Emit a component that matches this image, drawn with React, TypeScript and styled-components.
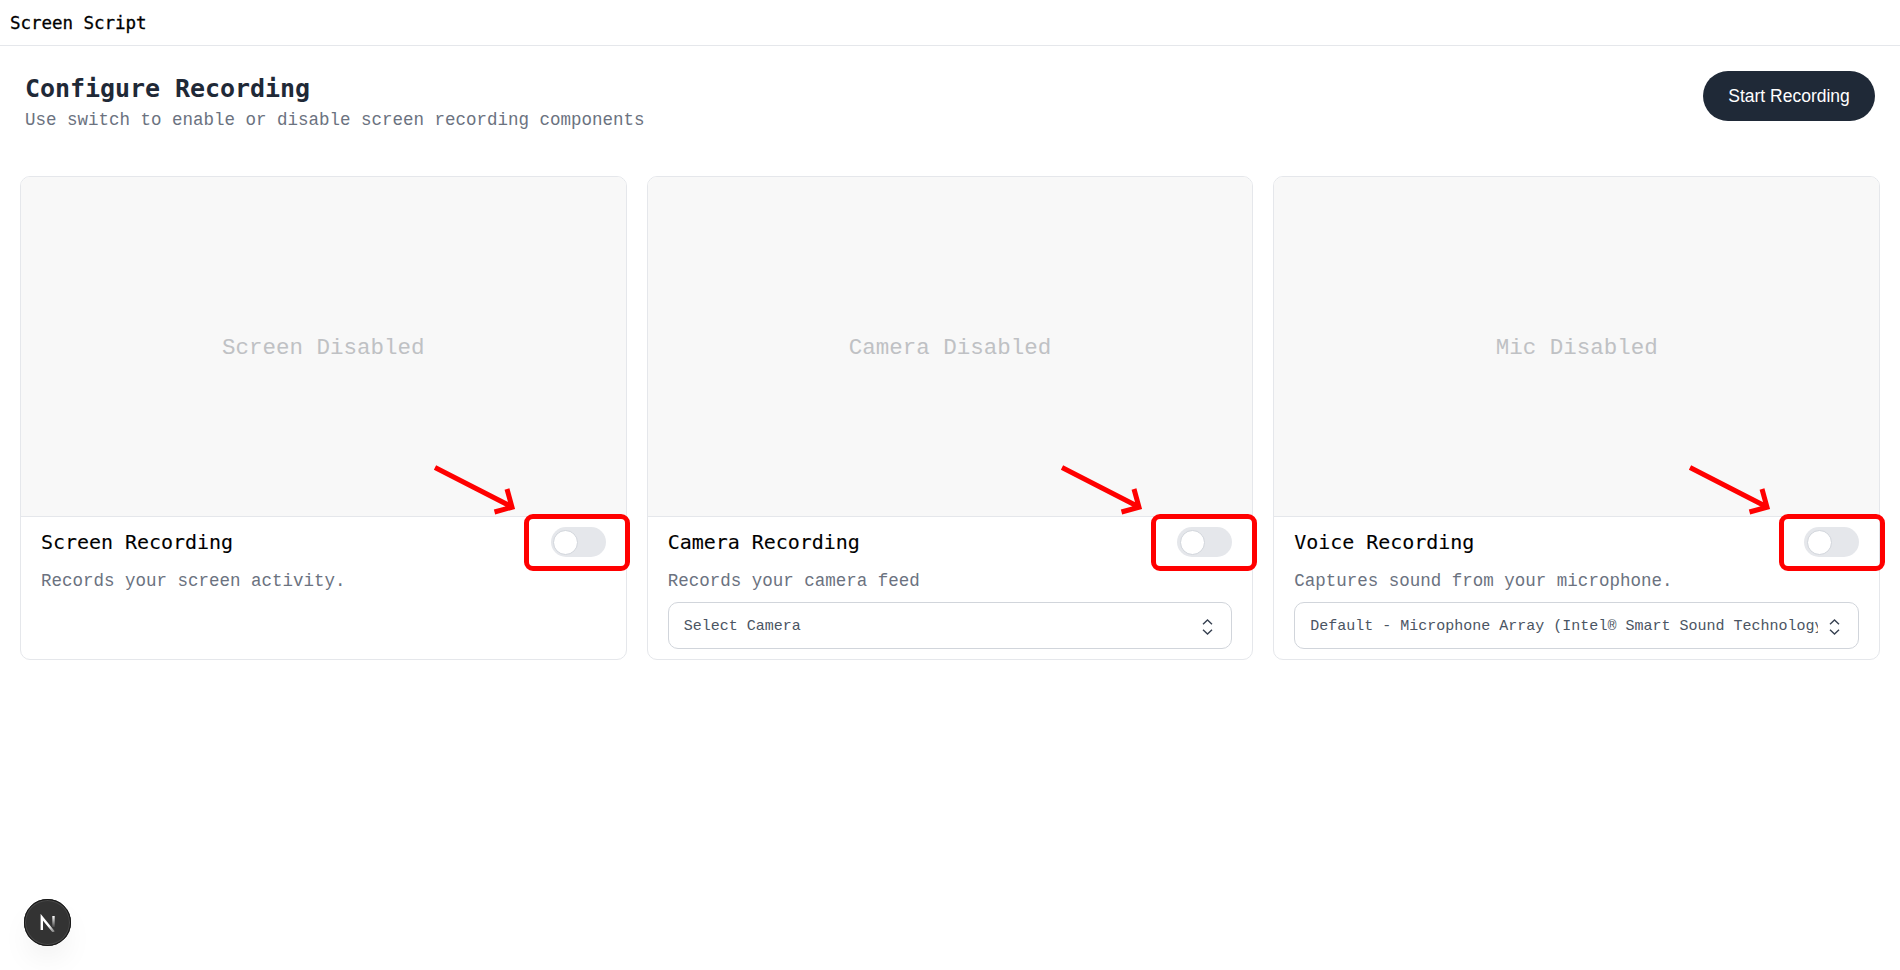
import React from 'react';
import styled, { createGlobalStyle } from 'styled-components';

const headingFont = '"DejaVu Sans Mono", "Liberation Mono", monospace';

const GlobalStyle = createGlobalStyle`
  *, *::before, *::after { box-sizing: border-box; }
  html, body { margin: 0; padding: 0; background: #fff; }
  body {
    font-family: "Liberation Mono", "DejaVu Sans Mono", monospace;
    color: #000;
    overflow: hidden;
  }
  h1, h2, p { margin: 0; font-weight: 400; }
  button { font: inherit; border: 0; padding: 0; cursor: pointer; }
`;

const Page = styled.div`
  min-height: 970px;
`;

const TopBar = styled.header`
  height: 46px;
  display: flex;
  align-items: center;
  padding: 0 10px;
  border-bottom: 1px solid #e5e7eb;
  font-family: ${headingFont};
  font-size: 17.5px;
  letter-spacing: -0.035px;
  -webkit-text-stroke: 0.3px #000;
`;

const Intro = styled.section`
  display: flex;
  justify-content: space-between;
  align-items: flex-start;
  height: 110px;
  padding: 25px;
`;

const Heading = styled.h1`
  margin-bottom: 2px;
  font-family: ${headingFont};
  font-size: 25px;
  line-height: 35px;
  font-weight: 700;
  letter-spacing: -0.05px;
  color: #1f2937;
`;

const Subheading = styled.p`
  font-size: 17.5px;
  line-height: 25px;
  color: #6b7280;
`;

const StartButton = styled.button`
  width: 172px;
  height: 50px;
  border-radius: 25px;
  background: #1f2937;
  color: #fff;
  font-family: "Liberation Sans", Arial, sans-serif;
  font-size: 17.5px;
  white-space: nowrap;
`;

const Cards = styled.main`
  display: grid;
  grid-template-columns: repeat(3, minmax(0, 1fr));
  gap: 20px;
  padding: 20px;
`;

const Card = styled.article`
  position: relative;
  border: 1px solid #e5e7eb;
  border-radius: 10px;
`;

const Preview = styled.div`
  height: 340px;
  display: flex;
  align-items: center;
  justify-content: center;
  padding-top: 2px;
  border-bottom: 1px solid #e5e7eb;
  border-radius: 9px 9px 0 0;
  background: #f8f8f8;
  color: #bfc1c4;
  font-size: 22.5px;
`;

const Details = styled.div`
  display: flex;
  flex-direction: column;
  gap: 10px;
  padding: 10px 20px;
`;

const TitleRow = styled.div`
  height: 30px;
  display: flex;
  align-items: center;
  justify-content: space-between;
`;

const CardTitle = styled.h2`
  font-family: ${headingFont};
  font-size: 20px;
  letter-spacing: -0.04px;
  -webkit-text-stroke: 0.1px #000;
`;

const Switch = styled.button`
  width: 55px;
  height: 30px;
  display: flex;
  align-items: center;
  padding-left: 2.5px;
  border-radius: 15px;
  background: #e5e7eb;
`;

const Thumb = styled.span`
  width: 25px;
  height: 25px;
  border: 1px solid #d1d5db;
  border-radius: 50%;
  background: #fff;
`;

const Description = styled.p`
  height: 25px;
  padding-top: 2px;
  font-size: 17.5px;
  line-height: 25px;
  color: #6b7280;
`;

const SelectBox = styled.button`
  height: 47px;
  display: flex;
  align-items: center;
  gap: 11px;
  padding: 2px 18px 0 15px;
  border: 1px solid #d1d5db;
  border-radius: 10px;
  background: #fff;
  color: #4b5563;
`;

const SelectValue = styled.span`
  flex: 1;
  overflow: hidden;
  white-space: nowrap;
  text-align: left;
  font-size: 15px;
`;

const Highlight = styled.div<{ $overhang: number }>`
  position: absolute;
  top: 337px;
  right: ${(p) => -p.$overhang - 1}px;
  width: 106px;
  height: 57px;
  border: 5px solid #f00;
  border-radius: 9px;
  pointer-events: none;
`;

const Arrow = styled.svg`
  position: absolute;
  left: -96px;
  top: -55px;
  overflow: visible;
`;

const DevBadge = styled.div`
  position: fixed;
  left: 24px;
  bottom: 24px;
  width: 47px;
  height: 47px;
  display: flex;
  align-items: center;
  justify-content: center;
  border-radius: 50%;
  background: #333;
  box-shadow: inset 0 0 0 1px #171717, inset 0 0 0 2px #484848,
    0 16px 32px -8px rgba(0, 0, 0, 0.1);
`;

const UpDown = () => (
  <svg width="11" height="16" viewBox="0 0 11 16" fill="none" stroke="#374151" strokeWidth="1.4">
    <path d="M1 5.3 5.5 1 10 5.3M1 10.7 5.5 15 10 10.7" />
  </svg>
);

const Callout = ({ overhang }: { overhang: number }) => (
  <Highlight $overhang={overhang}>
    <Arrow width="90" height="50" viewBox="0 0 90 50" fill="none" stroke="#f00" strokeWidth="5">
      <path d="M2 3.5 79.5 43.2M74 25 79 43.2 61.5 48" />
    </Arrow>
  </Highlight>
);

const NextMark = () => (
  <svg width="18" height="18" viewBox="0 0 18 18" fill="none">
    <defs>
      <linearGradient id="diag" x1="11" y1="11" x2="16" y2="18" gradientUnits="userSpaceOnUse">
        <stop stopColor="#fff" />
        <stop offset="1" stopColor="#fff" stopOpacity="0.3" />
      </linearGradient>
      <linearGradient id="stem" x1="15" y1="2" x2="15" y2="13" gradientUnits="userSpaceOnUse">
        <stop stopColor="#fff" />
        <stop offset="1" stopColor="#fff" stopOpacity="0.1" />
      </linearGradient>
    </defs>
    <path d="M2.8 16V3.2L14.8 18" stroke="url(#diag)" strokeWidth="2.4" />
    <path d="M14.5 2V13" stroke="url(#stem)" strokeWidth="2.4" />
  </svg>
);

const sources = [
  { off: 'Screen Disabled', title: 'Screen Recording', text: 'Records your screen activity.', overhang: 3.33 },
  {
    off: 'Camera Disabled', title: 'Camera Recording', text: 'Records your camera feed',
    device: 'Select Camera', overhang: 3.67,
  },
  {
    off: 'Mic Disabled', title: 'Voice Recording', text: 'Captures sound from your microphone.',
    device: 'Default - Microphone Array (Intel® Smart Sound Technology', overhang: 5,
  },
];

export default function App() {
  return (
    <Page>
      <GlobalStyle />
      <TopBar>Screen Script</TopBar>
      <Intro>
        <div>
          <Heading>Configure Recording</Heading>
          <Subheading>Use switch to enable or disable screen recording components</Subheading>
        </div>
        <StartButton>Start Recording</StartButton>
      </Intro>
      <Cards>
        {sources.map((s) => (
          <Card key={s.title}>
            <Preview>{s.off}</Preview>
            <Details>
              <TitleRow>
                <CardTitle>{s.title}</CardTitle>
                <Switch role="switch" aria-checked={false} aria-label={s.title}>
                  <Thumb />
                </Switch>
              </TitleRow>
              <Description>{s.text}</Description>
              {s.device && (
                <SelectBox>
                  <SelectValue>{s.device}</SelectValue>
                  <UpDown />
                </SelectBox>
              )}
            </Details>
            <Callout overhang={s.overhang} />
          </Card>
        ))}
      </Cards>
      <DevBadge>
        <NextMark />
      </DevBadge>
    </Page>
  );
}
